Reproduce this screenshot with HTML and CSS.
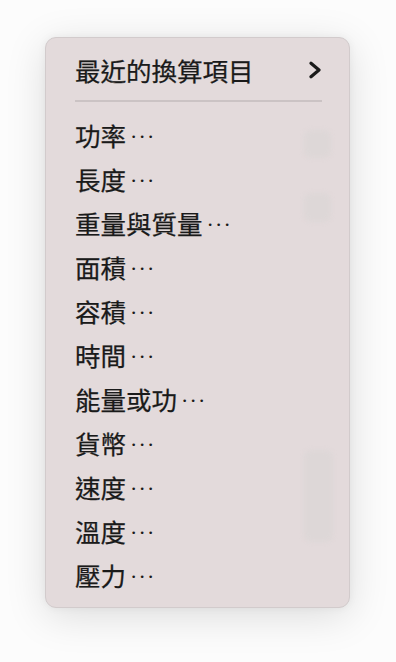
FILE: index.html
```html
<!DOCTYPE html>
<html lang="zh-Hant">
<head>
<meta charset="utf-8">
<link rel="stylesheet" href="styles.css">
</head>
<body>
<div class="menu">
  <div class="blob blob-a"></div>
  <div class="blob blob-b"></div>
  <div class="blob blob-c"></div>
  <div class="item submenu">
    <span>最近的換算項目</span>
    <svg class="chev" width="14" height="18" viewBox="0 0 14 18"><path d="M3 2.2 L11 9 L3 15.8" fill="none" stroke="#1a1a1a" stroke-width="3.2" stroke-linecap="round" stroke-linejoin="round"/></svg>
  </div>
  <div class="sep"></div>
  <div class="item">功率<span class="dots">•••</span></div>
  <div class="item">長度<span class="dots">•••</span></div>
  <div class="item">重量與質量<span class="dots">•••</span></div>
  <div class="item">面積<span class="dots">•••</span></div>
  <div class="item">容積<span class="dots">•••</span></div>
  <div class="item">時間<span class="dots">•••</span></div>
  <div class="item">能量或功<span class="dots">•••</span></div>
  <div class="item">貨幣<span class="dots">•••</span></div>
  <div class="item">速度<span class="dots">•••</span></div>
  <div class="item">溫度<span class="dots">•••</span></div>
  <div class="item">壓力<span class="dots">•••</span></div>
</div>
</body>
</html>
```
FILE: styles.css
```css
html {
  background: #fcfcfc;
}
html, body {
  margin: 0;
  padding: 0;
}
body {
  box-sizing: border-box;
  min-height: 100vh;
  padding: 37px 0 0 45px;
  background: #fcfcfc;
  font-family: "Noto Sans CJK TC", "Noto Sans CJK SC", sans-serif;
}
.menu {
  position: relative;
  box-sizing: border-box;
  width: 305px;
  height: 571px;
  background: #e3dadb;
  border: 1px solid #d2cbcc;
  border-radius: 11px;
  box-shadow: 0 8px 40px rgba(0,0,0,0.13), 0 0 8px rgba(0,0,0,0.05);
  padding: 10px 27px 10px 29px;
  display: flex;
  flex-direction: column;
}
.blob {
  position: absolute;
  background: #ddd7d7;
  border-radius: 8px;
  filter: blur(2px);
}
.blob-a { left: 258px; top: 92px; width: 27px; height: 28px; }
.blob-b { left: 258px; top: 155px; width: 27px; height: 29px; }
.blob-c { left: 258px; top: 412px; width: 29px; height: 92px; }
.item {
  position: relative;
  height: 44px;
  display: flex;
  align-items: center;
  font-size: 25.5px;
  color: #1a1a1a;
  line-height: 1;
  white-space: nowrap;
  -webkit-text-stroke: 0.25px #1a1a1a;
}
.dots {
  font-family: "DejaVu Sans", sans-serif;
  font-size: 9px;
  letter-spacing: 3.2px;
  margin-left: 5px;
  padding-top: 5px;
  -webkit-text-stroke: 0;
}
.submenu {
  justify-content: space-between;
}
.sep {
  position: relative;
  height: 2px;
  background: #cbc3c4;
  margin: 8px 0 11px;
}
```
